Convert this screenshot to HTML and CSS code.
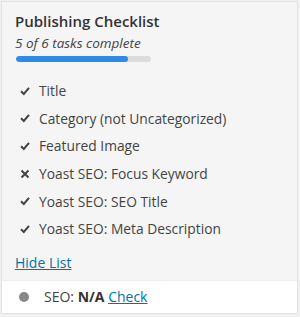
FILE: index.html
```html
<!DOCTYPE html>
<html>
<head>
<meta charset="utf-8">
<link rel="stylesheet" href="styles.css">
</head>
<body>
<div class="box">
  <div class="main">
    <h2 class="title">Publishing Checklist</h2>
    <div class="status">5 of 6 tasks complete</div>
    <div class="bar"><div class="fill" style="width:83.3%"></div></div>
    <ul class="list">
      <li><svg class="ic" viewBox="0 0 10 10"><path d="M1 5.2 L3.8 8 L9 1.8" /></svg>Title</li>
      <li><svg class="ic" viewBox="0 0 10 10"><path d="M1 5.2 L3.8 8 L9 1.8" /></svg>Category (not Uncategorized)</li>
      <li><svg class="ic" viewBox="0 0 10 10"><path d="M1 5.2 L3.8 8 L9 1.8" /></svg>Featured Image</li>
      <li><svg class="ic" viewBox="0 0 10 10"><path d="M1.5 1.5 L8.5 8.5 M8.5 1.5 L1.5 8.5" /></svg>Yoast SEO: Focus Keyword</li>
      <li><svg class="ic" viewBox="0 0 10 10"><path d="M1 5.2 L3.8 8 L9 1.8" /></svg>Yoast SEO: SEO Title</li>
      <li><svg class="ic" viewBox="0 0 10 10"><path d="M1 5.2 L3.8 8 L9 1.8" /></svg>Yoast SEO: Meta Description</li>
    </ul>
    <a class="hide" href="#">Hide List</a>
  </div>
  <div class="foot">
    <span class="dot"></span>
    <span class="seo">SEO: <b>N/A</b> <a href="#">Check</a></span>
  </div>
</div>
</body>
</html>
```
FILE: styles.css
```css
html, body { margin: 0; padding: 0; }
body {
  background: #f1f1f1;
  font-family: "Open Sans", "Liberation Sans", sans-serif;
  color: #444;
  font-size: 14px;
}
.box {
  width: 295px;
  margin: 1px 0 0 1px;
  border: 1px solid #e2e2e2;
  background: #f5f5f5;
}
.main { padding: 9px 13px 8px 13px; }
.title {
  margin: 0;
  font-size: 15px;
  font-weight: 600;
  line-height: 20px;
  color: #333;
}
.status {
  font-style: italic;
  font-size: 13.5px;
  line-height: 18px;
  margin-top: 3px;
  color: #444;
}
.bar {
  width: 135px;
  height: 6px;
  background: #dcdcdc;
  border-radius: 3px;
  margin: 4px 0 0 1px;
  overflow: hidden;
}
.fill { height: 100%; background: #2f8be8; border-radius: 3px; }
.list {
  list-style: none;
  margin: 15px 0 0 0;
  padding: 0;
}
.list li {
  display: flex;
  align-items: center;
  height: 27.6px;
  line-height: 19px;
  font-size: 13.8px;
}
.ic {
  width: 10px;
  height: 10px;
  margin: 0 9px 0 5px;
  fill: none;
  stroke: #444;
  stroke-width: 2;
  flex: none;
}
.hide {
  display: inline-block;
  margin-top: 10px;
  color: #0073aa;
  text-decoration: underline;
  line-height: 19px;
}
.foot {
  background: #fff;
  border-top: 1px solid #eee;
  height: 32px;
  display: flex;
  align-items: center;
  padding-left: 17px;
}
.dot {
  width: 10px;
  height: 10px;
  border-radius: 50%;
  background: #888;
  margin-right: 15px;
}
.seo b { font-weight: 700; color: #333; }
.seo a { color: #0073aa; text-decoration: underline; }
```
